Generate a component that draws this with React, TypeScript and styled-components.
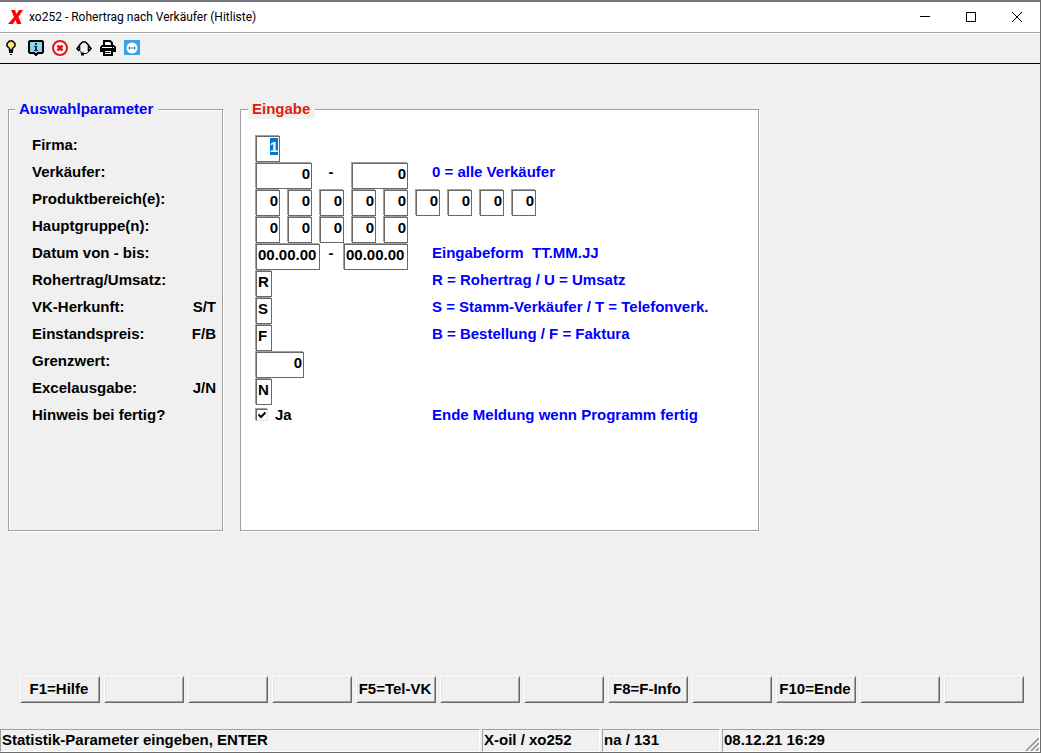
import { useEffect, useRef, type ReactNode } from "react";
import styled, { createGlobalStyle } from "styled-components";

const GlobalStyle = createGlobalStyle`
  *, *::before, *::after { box-sizing: border-box; }
  body {
    margin: 0;
    background: #f0f0f0;
    color: #000;
    font: bold 15px/20px "Liberation Sans", Arial, sans-serif;
  }
`;

const Window = styled.div`
  display: flex;
  flex-direction: column;
  min-height: 100vh;
  background: #f0f0f0;
  border: solid #6b6b6b;
  border-width: 0 1px 1px 0;
`;

const TitleBar = styled.header`
  display: flex;
  align-items: center;
  height: 33px;
  padding-left: 8px;
  background: #fff;
  border-top: 2px solid #75777c;
  border-bottom: 1px solid #a0a0a0;
`;

const Title = styled.h1`
  flex: 1;
  margin: 0 0 0 5px;
  font: 12px/16px Roboto, "Noto Sans", sans-serif;
`;

const CaptionButton = styled.button`
  display: grid;
  place-items: center;
  width: 46px;
  height: 28px;
  padding: 0;
  border: 0;
  background: none;
`;

const Toolbar = styled.div`
  display: flex;
  align-items: center;
  gap: 8px;
  height: 31px;
  padding: 0 0 2px 4px;
  border-top: 1px solid #fff;
  border-bottom: 1px solid #000;
`;

const ToolButton = styled.button`
  display: block;
  width: 16px;
  height: 16px;
  padding: 0;
  border: 0;
  background: none;

  svg { display: block; }
`;

const Main = styled.main`
  display: flex;
  flex: 1;
  align-items: flex-start;
  gap: 17px;
  padding: 35px 8px;
`;

const Panel = styled.fieldset<{ $wide?: boolean }>`
  flex: 0 0 auto;
  width: ${(p) => (p.$wide ? 519 : 215)}px;
  min-height: 432px;
  margin: 0;
  padding: 16px 0 0 ${(p) => (p.$wide ? 15 : 23)}px;
  border: 1px solid #a0a0a0;
  box-shadow: 1px 1px 0 #fff, inset 1px 1px 0 #fff;
  background: ${(p) => (p.$wide ? "#fff" : "#f0f0f0")};
`;

const Legend = styled.legend<{ $accent: string; $shift: number }>`
  margin-left: -${(p) => p.$shift}px;
  padding: 0 5px 0 4px;
  color: ${(p) => p.$accent};
  background: #f0f0f0;
`;

const LabelRow = styled.div`
  display: flex;
  justify-content: space-between;
  height: 27px;
  padding-right: 6px;
`;

const FieldRow = styled.div`
  display: flex;
  height: 27px;
`;

const Controls = styled.div`
  display: flex;
  align-items: flex-start;
  gap: 8px;
  width: 176px;
`;

const Dash = styled.span<{ $width: number }>`
  width: ${(p) => p.$width}px;
  margin: 0 -8px;
  padding-right: 2px;
  text-align: center;
`;

const Hint = styled.span`
  color: #0000ff;
  white-space: pre;
`;

const Field = styled.input<{ $width: number; $right?: boolean }>`
  flex: none;
  width: ${(p) => p.$width}px;
  height: 26px;
  margin: 1px 0 0;
  padding: 0 1px 6px;
  border: 1px solid #696969;
  border-radius: 0;
  outline: 0;
  box-shadow: -1px -1px 0 #a0a0a0;
  background: #fff;
  color: #000;
  font: bold 15px/18px "Liberation Sans", Arial, sans-serif;
  text-align: ${(p) => (p.$right ? "right" : "left")};

  &::selection { background: #0078d7; color: #fff; }
`;

const CheckLabel = styled.label`
  display: flex;
  align-items: center;
  gap: 7px;
  height: 20px;
`;

const CheckBox = styled.input`
  appearance: none;
  width: 12px;
  height: 12px;
  margin: 0;
  border: 1px solid;
  border-color: #696969 #e3e3e3 #e3e3e3 #696969;
  box-shadow: -1px -1px 0 #a0a0a0;
  background: #fff;

  &:checked {
    background: #fff url("data:image/svg+xml,%3Csvg xmlns='http://www.w3.org/2000/svg' viewBox='0 0 10 10'%3E%3Cpath d='M1.5 4.5l2.5 2.5 4.5-4.5' fill='none' stroke='%23000' stroke-width='2'/%3E%3C/svg%3E") center / 10px 10px no-repeat;
  }
`;

const FunctionKeys = styled.nav`
  display: grid;
  grid-template-columns: repeat(12, minmax(0, 1fr));
  gap: 4px;
  padding: 0 16px 26px 20px;
`;

const FunctionKey = styled.button`
  height: 27px;
  padding: 0 2px 2px 0;
  border: 1px solid;
  border-color: #fff #696969 #696969 #fff;
  box-shadow: inset 1px 1px 0 #e3e3e3, inset -1px -1px 0 #a0a0a0;
  background: #f0f0f0;
  color: #000;
  font: bold 15px/20px "Liberation Sans", Arial, sans-serif;
  white-space: nowrap;
`;

const StatusBar = styled.footer`
  display: grid;
  grid-template-columns: 480px 118px 118px 1fr;
  gap: 2px;
`;

const StatusCell = styled.div`
  display: flex;
  justify-content: space-between;
  height: 23px;
  padding-left: 1px;
  border: 1px solid;
  border-color: #a0a0a0 #fff #fff #a0a0a0;

  svg { align-self: flex-end; }
`;

const labels: { id: string; text: string; keys?: string }[] = [
  { id: "firma", text: "Firma:" },
  { id: "verkaeufer", text: "Verkäufer:" },
  { id: "produkt", text: "Produktbereich(e):" },
  { id: "gruppe", text: "Hauptgruppe(n):" },
  { id: "datum", text: "Datum von - bis:" },
  { id: "rohertrag", text: "Rohertrag/Umsatz:" },
  { id: "herkunft", text: "VK-Herkunft:", keys: "S/T" },
  { id: "preis", text: "Einstandspreis:", keys: "F/B" },
  { id: "grenzwert", text: "Grenzwert:" },
  { id: "excel", text: "Excelausgabe:", keys: "J/N" },
  { id: "hinweis", text: "Hinweis bei fertig?" },
];

const functionKeys = ["F1=Hilfe", "", "", "", "F5=Tel-VK", "", "", "F8=F-Info", "", "F10=Ende", "", ""];

function Row({ children, hint }: { children: ReactNode; hint?: string }) {
  return (
    <FieldRow>
      <Controls>{children}</Controls>
      {hint && <Hint>{hint}</Hint>}
    </FieldRow>
  );
}

function NumberFields({ id, name, count }: { id: string; name: string; count: number }) {
  return (
    <>
      {Array.from({ length: count }, (_, i) => (
        <Field
          key={i}
          id={i === 0 ? id : `${id}-${i + 1}`}
          aria-label={i === 0 ? undefined : `${name} ${i + 1}`}
          $width={24}
          $right
          defaultValue="0"
        />
      ))}
    </>
  );
}

function BulbIcon() {
  return (
    <svg width="16" height="16" viewBox="0 0 16 16">
      <path d="M5.500 10V8.500L3 6V3.500L5.500 1h3L11 3.500V6L8.500 8.500V10z" fill="#f7e967" stroke="#000" strokeWidth="1.500" />
      <path d="M5 10h4v3H5zM6 14h2v1H6z" fill="#000" />
      <path d="M5 4.500L6.500 3" stroke="#fff" />
    </svg>
  );
}

function InfoIcon() {
  return (
    <svg width="16" height="16" viewBox="0 0 16 16">
      <path d="M2 1h12l1 1v10l-1 1h-4l-2 2-2-2H2l-1-1V2z" fill="#8fd3ee" stroke="#000" strokeWidth="2" />
      <path d="M7 3h2v2H7zM6 6h3v4h1v1H6v-1h1V7H6z" fill="#16324a" />
    </svg>
  );
}

function CancelIcon() {
  return (
    <svg width="16" height="16" viewBox="0 0 16 16" fill="none" stroke="#e3111b">
      <circle cx="8" cy="8" r="7" fill="#fff" strokeWidth="2" />
      <path d="M5.500 5.500l5 5M10.500 5.500l-5 5" strokeWidth="2.600" />
    </svg>
  );
}

function HeadsetIcon() {
  return (
    <svg width="16" height="16" viewBox="0 0 16 16" fill="none" stroke="#000" strokeWidth="1.600">
      <path d="M3.500 11V5l3-3h3l3 3v6" />
      <path d="M3 6L1 8.500 3 11M13 6l2 2.500L13 11" />
      <path d="M12.500 11v1l-2 1.500H8" strokeWidth="1" />
      <path d="M5 12.500h3v3H5z" fill="#000" stroke="none" />
      <path d="M4 12h1.500" strokeWidth="1" />
    </svg>
  );
}

function PrinterIcon() {
  return (
    <svg width="16" height="16" viewBox="0 0 16 16">
      <path d="M4 6V1h6l2 2v3z" fill="#fff" stroke="#000" strokeWidth="2" />
      <path d="M2 5h12l2 2v5H0V7z" fill="#000" />
      <path d="M2 7h10v1H2zM13 7h1v1h-1z" fill="#fff" />
      <path d="M4 10h8v5H4z" fill="#fff" stroke="#000" strokeWidth="2" />
      <path d="M5 12.500h5" stroke="#000" />
    </svg>
  );
}

function RemoteIcon() {
  return (
    <svg width="16" height="16" viewBox="0 0 16 16">
      <path d="M0 0h16v15H0z" fill="#36a3e6" />
      <circle cx="8" cy="8" r="5.500" fill="#fff" />
      <path d="M4 8l2-2v1.500h4V6l2 2-2 2V8.500H6V10z" fill="#3b8fc4" />
    </svg>
  );
}

export default function App() {
  const firma = useRef<HTMLInputElement>(null);

  useEffect(() => {
    firma.current?.focus();
    firma.current?.select();
  }, []);

  return (
    <>
      <GlobalStyle />
      <Window>
        <TitleBar>
          <svg width="16" height="16" viewBox="0 0 16 16" aria-hidden="true">
            <path d="M3 1h4l1.500 4L11 1h4l-4.500 7 3 7H9L7.500 11 5 15H0l6-7z" fill="#f00" />
          </svg>
          <Title>xo252 - Rohertrag nach Verkäufer (Hitliste)</Title>
          <CaptionButton aria-label="Minimieren">
            <svg width="10" height="10"><path d="M0 4.500h10" stroke="#000" /></svg>
          </CaptionButton>
          <CaptionButton aria-label="Maximieren">
            <svg width="10" height="10"><path d="M.5.5h9v9h-9z" fill="none" stroke="#000" /></svg>
          </CaptionButton>
          <CaptionButton aria-label="Schließen">
            <svg width="10" height="10"><path d="M0 0l10 10M10 0L0 10" stroke="#000" /></svg>
          </CaptionButton>
        </TitleBar>

        <Toolbar role="toolbar">
          <ToolButton aria-label="Tipp"><BulbIcon /></ToolButton>
          <ToolButton aria-label="Info"><InfoIcon /></ToolButton>
          <ToolButton aria-label="Abbrechen"><CancelIcon /></ToolButton>
          <ToolButton aria-label="Support"><HeadsetIcon /></ToolButton>
          <ToolButton aria-label="Drucken"><PrinterIcon /></ToolButton>
          <ToolButton aria-label="Fernwartung"><RemoteIcon /></ToolButton>
        </Toolbar>

        <Main>
          <Panel>
            <Legend $accent="#0000ff" $shift={17}>Auswahlparameter</Legend>
            {labels.map((l) => (
              <LabelRow key={l.id}>
                <label htmlFor={l.id}>{l.text}</label>
                {l.keys && <span>{l.keys}</span>}
              </LabelRow>
            ))}
          </Panel>

          <Panel $wide>
            <Legend $accent="#dd1f0a" $shift={8}>Eingabe</Legend>
            <Row><Field ref={firma} id="firma" $width={24} $right defaultValue="1" /></Row>
            <Row hint="0 = alle Verkäufer">
              <Field id="verkaeufer" $width={56} $right defaultValue="0" />
              <Dash $width={40}>-</Dash>
              <Field aria-label="Verkäufer bis" $width={56} $right defaultValue="0" />
            </Row>
            <Row><NumberFields id="produkt" name="Produktbereich" count={9} /></Row>
            <Row><NumberFields id="gruppe" name="Hauptgruppe" count={5} /></Row>
            <Row hint="Eingabeform  TT.MM.JJ">
              <Field id="datum" $width={64} defaultValue="00.00.00" />
              <Dash $width={24}>-</Dash>
              <Field aria-label="Datum bis" $width={64} defaultValue="00.00.00" />
            </Row>
            <Row hint="R = Rohertrag / U = Umsatz"><Field id="rohertrag" $width={16} defaultValue="R" /></Row>
            <Row hint="S = Stamm-Verkäufer / T = Telefonverk."><Field id="herkunft" $width={16} defaultValue="S" /></Row>
            <Row hint="B = Bestellung / F = Faktura"><Field id="preis" $width={16} defaultValue="F" /></Row>
            <Row><Field id="grenzwert" $width={48} $right defaultValue="0" /></Row>
            <Row><Field id="excel" $width={16} defaultValue="N" /></Row>
            <Row hint="Ende Meldung wenn Programm fertig">
              <CheckLabel><CheckBox id="hinweis" type="checkbox" defaultChecked />Ja</CheckLabel>
            </Row>
          </Panel>
        </Main>

        <FunctionKeys aria-label="Funktionstasten">
          {functionKeys.map((text, i) => (
            <FunctionKey key={i} aria-label={text || `F${i + 1}`}>{text}</FunctionKey>
          ))}
        </FunctionKeys>

        <StatusBar>
          <StatusCell>Statistik-Parameter eingeben, ENTER</StatusCell>
          <StatusCell>X-oil / xo252</StatusCell>
          <StatusCell>na / 131</StatusCell>
          <StatusCell>
            08.12.21 16:29
            <svg width="14" height="14" viewBox="0 0 14 14" aria-hidden="true">
              <path d="M1 14L14 1M6 14l8-8M11 14l3-3" stroke="#8c8c8c" strokeWidth="1.500" />
            </svg>
          </StatusCell>
        </StatusBar>
      </Window>
    </>
  );
}
